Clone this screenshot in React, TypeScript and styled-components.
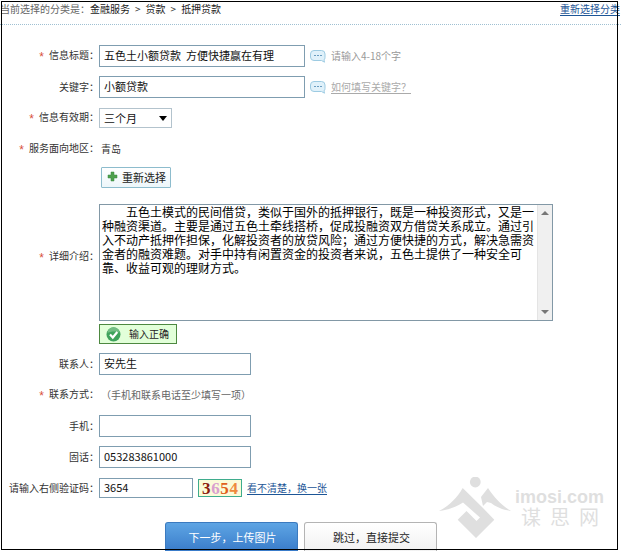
import React from "react";
import styled, { createGlobalStyle } from "styled-components";

const GlobalStyle = createGlobalStyle`
  * { box-sizing: border-box; }
  body {
    margin: 0;
    background: #fff;
    color: #333;
    font-family: "Noto Sans CJK SC", "Liberation Sans", sans-serif;
    font-size: 10px;
    line-height: 14px;
  }
  button, input, select, textarea { font-family: inherit; margin: 0; }
`;

const Page = styled.div`
  position: relative;
  min-height: 100vh;
  overflow: hidden;
  display: flex;
  flex-direction: column;
`;

const Frame = styled.div`
  position: absolute;
  inset: 1px 3px 1px 1px;
  border: 1px solid #000;
  pointer-events: none;
`;

const Header = styled.header`
  display: flex;
  justify-content: space-between;
  height: 25px;
  padding-top: 2px;
  padding-right: 1px;
  border-bottom: 1px dotted #9fc0d2;
  color: #666;
`;

const Crumb = styled.span`
  color: #222;
`;

const Arrow = styled.span`
  margin: 0 5px;
  color: #333;
`;

const TextLink = styled.a<{ $tone?: "hint" }>`
  color: ${(p) => (p.$tone === "hint" ? "#aaa" : "#1c5596")};
  text-decoration: underline;
  text-underline-offset: 2px;
`;

const Form = styled.form`
  display: flex;
  flex-direction: column;
  gap: 9px;
  padding-top: 20px;
`;

const Row = styled.div<{ $top?: boolean }>`
  display: grid;
  grid-template-columns: 99px minmax(0, 1fr);
  align-items: ${(p) => (p.$top ? "start" : "center")};
  min-height: 22px;
`;

const Label = styled.label<{ $drop?: boolean }>`
  justify-self: end;
  padding-top: ${(p) => (p.$drop ? "52px" : "0")};
  white-space: nowrap;
`;

const Star = styled.span`
  margin-right: 5px;
  color: #d8503c;
  font-family: "Liberation Sans", sans-serif;
  font-size: 12px;
  vertical-align: -2px;
`;

const Field = styled.div`
  display: flex;
  align-items: center;
  gap: 5px;
`;

const Stack = styled.div`
  display: flex;
  flex-direction: column;
  align-items: flex-start;
  gap: 3px;
  margin-top: 7px;
  padding-right: 20px;
`;

const widths = { long: "206px", medium: "152px", short: "94px" };

const TextInput = styled.input<{ $size: keyof typeof widths }>`
  width: ${(p) => widths[p.$size]};
  height: ${(p) => (p.$size === "short" ? "20px" : "22px")};
  padding: 0 4px 2px;
  border: 1px solid #7f9db0;
  background: #fff;
  color: #111;
  font-size: 11px;
`;

const SelectBox = styled.div`
  display: flex;
  align-items: center;
  width: 73px;
  height: 20px;
  border: 1px solid #b3c3cd;

  svg { margin-left: -12px; pointer-events: none; }
`;

const Select = styled.select`
  appearance: none;
  width: 100%;
  height: 18px;
  padding: 0 14px 0 4px;
  border: 0;
  background: transparent;
  color: #111;
  font-size: 11px;
`;

const Hint = styled.span`
  display: flex;
  align-items: center;
  gap: 5px;
  color: #999;
`;

const Plain = styled.span<{ $muted?: boolean }>`
  padding-left: 2px;
  color: ${(p) => (p.$muted ? "#666" : "#333")};
`;

const RegionRow = styled(Row)`
  margin-top: -3px;
`;

const RegionButton = styled.button`
  display: flex;
  align-items: center;
  gap: 4px;
  height: 21px;
  margin-left: 2px;
  padding: 0 4px 1px 5px;
  border: 1px solid #8dbccd;
  border-radius: 1px;
  background: linear-gradient(#fff, #edf6fa);
  color: #222;
  font-size: 11px;
`;

const TextAreaFrame = styled.div`
  display: flex;
  width: 100%;
  max-width: 454px;
  height: 117px;
  border: 1px solid #8298a6;
`;

const TextArea = styled.textarea`
  flex: 1;
  min-width: 0;
  padding: 0 2px;
  border: 0;
  resize: none;
  outline: none;
  scrollbar-width: none;
  background: #fff;
  color: #000;
  font-size: 12px;
  line-height: 14px;
`;

const ScrollTrack = styled.div`
  display: flex;
  flex-direction: column;
  justify-content: space-between;
  align-items: center;
  width: 15px;
  padding: 6px 0;
  border-left: 1px solid #e4e4e4;
  background: #f0f0f0;
`;

const Badge = styled.output`
  display: flex;
  align-items: center;
  gap: 8px;
  width: 78px;
  height: 20px;
  padding-left: 6px;
  border: 1px solid #4d8840;
  background: #e2ffd9;
  color: #222;
  white-space: nowrap;
`;

const Captcha = styled.span`
  display: flex;
  justify-content: space-between;
  width: 44px;
  height: 18px;
  padding: 0 3px;
  border: 1px solid #3fac8d;
  background: #fbfbd8;
  font: bold 17px/18px "Liberation Serif", serif;
`;

const Digit = styled.span<{ $color: string }>`
  color: ${(p) => p.$color};
`;

const Actions = styled.div`
  display: flex;
  gap: 6px;
  margin-top: 14px;
  padding-left: 165px;
`;

const ActionButton = styled.button<{ $primary?: boolean }>`
  width: 133px;
  height: 29px;
  padding: 0 2px 0 4px;
  border: 1px solid ${(p) => (p.$primary ? "#3b7abf" : "#b4b4b4")};
  border-bottom: 0;
  border-radius: 3px 3px 0 0;
  background: ${(p) => (p.$primary ? "linear-gradient(#5ea5e4, #3a7cca)" : "linear-gradient(#fff, #f1f1f1)")};
  color: ${(p) => (p.$primary ? "#fff" : "#222")};
  font-size: 11px;
`;

const Watermark = styled.div`
  position: absolute;
  right: 14px;
  bottom: 12px;
  display: flex;
  gap: 3px;
  color: #dfdfdf;
  pointer-events: none;
`;

const WatermarkText = styled.div`
  display: flex;
  flex-direction: column;
  width: 92px;
  padding-top: 10px;
`;

const Domain = styled.span`
  font: bold 18px/20px "Liberation Sans", sans-serif;
`;

const SiteName = styled.span`
  padding-left: 6px;
  font-size: 20px;
  line-height: 20px;
  white-space: pre;
`;

const Bubble = () => (
  <svg width="16" height="13" viewBox="0 0 16 13" aria-hidden="true">
    <path d="M4 .5h7.5a3.5 3.5 0 0 1 3.5 3.5v3.5c0 1-.3 1.8-1 2.4l.5 2.3-3-1.7H4A3.5 3.5 0 0 1 .5 7V4A3.5 3.5 0 0 1 4 .5z" fill="#e0f1fa" stroke="#9dcbe2" />
    <path d="M4 5h2v1H4zM7 5h2v1H7zM10 5h2v1h-2z" fill="#6a9dc0" />
  </svg>
);

const Caret = () => (
  <svg width="9" height="5" viewBox="0 0 9 5" aria-hidden="true">
    <path d="M0 0h8L4 5z" fill="#000" />
  </svg>
);

const Plus = () => (
  <svg width="11" height="11" viewBox="0 0 11 11" aria-hidden="true">
    <path d="M4 1h3v3h3v3H7v3H4V7H1V4h3z" fill="#4ea04e" stroke="#3b8b43" strokeWidth=".5" />
  </svg>
);

const Check = () => (
  <svg width="15" height="15" viewBox="0 0 15 15" aria-hidden="true">
    <circle cx="7.5" cy="7.5" r="7" fill="#3fa35c" />
    <path d="M1.5 6a6 6 0 0 1 12 0c-3-2-8-2-12 0z" fill="#72bd83" />
    <path d="M4 7.5l2.8 3 4.5-5.5" fill="none" stroke="#fff" strokeWidth="2.2" />
  </svg>
);

const ScrollMark = ({ down }: { down?: boolean }) => (
  <svg width="8" height="4" viewBox="0 0 8 4" aria-hidden="true">
    <path d={down ? "M0 0h8L4 4z" : "M0 4h8L4 0z"} fill="#777" />
  </svg>
);

const Logo = () => (
  <svg width="73" height="62" viewBox="0 0 73 62" aria-hidden="true">
    <g fill="#dfdfdf">
      <circle cx="36.3" cy="5" r="5.4" />
      <path d="M23.7 11 44 31 55.3 42.7 37 61 18.700 42.700 27.500 34 37.500 44 41 40.500 24 25.500C18 29.500 10 33 0 34 10 29 18 21 23.700 11z" />
      <path d="M49 11c6 9 13 17 23 23-8-1-15-4-20-8l-4-1-4 4-2-9z" />
    </g>
  </svg>
);

const intro =
  "\u3000\u3000五色土模式的民间借贷，类似于国外的抵押银行，既是一种投资形式，又是一种融资渠道。主要是通过五色土牵线搭桥，促成投融资双方借贷关系成立。通过引入不动产抵押作担保，化解投资者的放贷风险；通过方便快捷的方式，解决急需资金者的融资难题。对手中持有闲置资金的投资者来说，五色土提供了一种安全可靠、收益可观的理财方式。";

export default function App() {
  return (
    <Page>
      <GlobalStyle />
      <Header>
        <nav>
          当前选择的分类是：<Crumb>金融服务</Crumb>
          <Arrow>&gt;</Arrow>
          <Crumb>贷款</Crumb>
          <Arrow>&gt;</Arrow>
          <Crumb>抵押贷款</Crumb>
        </nav>
        <TextLink href="#category">重新选择分类</TextLink>
      </Header>

      <Form onSubmit={(e) => e.preventDefault()}>
        <Row>
          <Label htmlFor="title"><Star>*</Star>信息标题：</Label>
          <Field>
            <TextInput id="title" $size="long" defaultValue="五色土小额贷款  方便快捷赢在有理" />
            <Hint><Bubble />请输入4-18个字</Hint>
          </Field>
        </Row>
        <Row>
          <Label htmlFor="keyword">关键字：</Label>
          <Field>
            <TextInput id="keyword" $size="long" defaultValue="小额贷款" />
            <Hint><Bubble /><TextLink $tone="hint" href="#keyword-help">如何填写关键字？</TextLink></Hint>
          </Field>
        </Row>
        <Row>
          <Label htmlFor="period"><Star>*</Star>信息有效期：</Label>
          <SelectBox>
            <Select id="period"><option>三个月</option></Select>
            <Caret />
          </SelectBox>
        </Row>
        <Row>
          <Label as="span"><Star>*</Star>服务面向地区：</Label>
          <Plain>青岛</Plain>
        </Row>
        <RegionRow>
          <span />
          <Field><RegionButton type="button"><Plus />重新选择</RegionButton></Field>
        </RegionRow>
        <Row $top>
          <Label htmlFor="intro" $drop><Star>*</Star>详细介绍：</Label>
          <Stack>
            <TextAreaFrame>
              <TextArea id="intro" defaultValue={intro} />
              <ScrollTrack><ScrollMark /><ScrollMark down /></ScrollTrack>
            </TextAreaFrame>
            <Badge htmlFor="intro"><Check />输入正确</Badge>
          </Stack>
        </Row>
        <Row>
          <Label htmlFor="contact">联系人：</Label>
          <TextInput id="contact" $size="medium" defaultValue="安先生" />
        </Row>
        <Row>
          <Label as="span"><Star>*</Star>联系方式：</Label>
          <Plain $muted>（手机和联系电话至少填写一项）</Plain>
        </Row>
        <Row>
          <Label htmlFor="mobile">手机：</Label>
          <TextInput id="mobile" $size="medium" />
        </Row>
        <Row>
          <Label htmlFor="phone">固话：</Label>
          <TextInput id="phone" $size="medium" defaultValue="053283861000" />
        </Row>
        <Row>
          <Label htmlFor="code">请输入右侧验证码：</Label>
          <Field>
            <TextInput id="code" $size="short" defaultValue="3654" />
            <Captcha>
              <Digit $color="#8c1c10">3</Digit>
              <Digit $color="#d9a0cf">6</Digit>
              <Digit $color="#e0601c">5</Digit>
              <Digit $color="#ee8a3c">4</Digit>
            </Captcha>
            <TextLink href="#refresh">看不清楚，换一张</TextLink>
          </Field>
        </Row>
        <Actions>
          <ActionButton type="submit" $primary>下一步，上传图片</ActionButton>
          <ActionButton type="button">跳过，直接提交</ActionButton>
        </Actions>
      </Form>

      <Watermark>
        <Logo />
        <WatermarkText>
          <Domain>imosi.com</Domain>
          <SiteName>谋  思  网</SiteName>
        </WatermarkText>
      </Watermark>
      <Frame />
    </Page>
  );
}
